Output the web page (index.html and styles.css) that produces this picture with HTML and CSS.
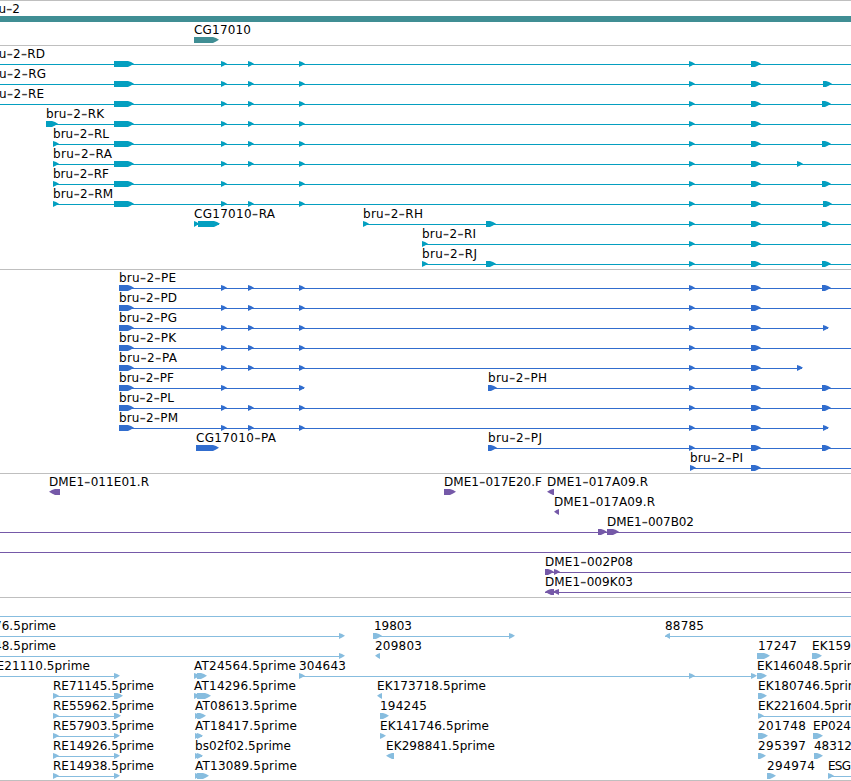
FILE: index.html
```
<!DOCTYPE html>
<html lang="en">
<head>
    <meta charset="UTF-8">
    <meta name="viewport" content="width=device-width, initial-scale=1.0">
    <title>bru-2 - Genome Browser</title>
    <link rel="stylesheet" href="styles.css">
</head>
<body>

    <div class="browser">
        <section class="track genes" id="genes"></section>
        <section class="track transcripts" id="transcripts"></section>
        <section class="track proteins" id="proteins"></section>
        <section class="track clones" id="clones"></section>
        <section class="track ests" id="ests"></section>
    </div>

    <script src="tracks.js"></script>
</body>
</html>
```
FILE: styles.css
```
body {
    margin: 0;
    background-color: #fff;
    font-family: 'DejaVu Sans', sans-serif;
}

.browser {
    box-sizing: border-box;
    width: 851px;
    height: 781px;
    overflow: hidden;
    display: flex;
    flex-direction: column;
    border-bottom: 1px solid #bfbfbf;
}

.track {
    flex: none;
    display: flex;
    flex-direction: column;
    padding-top: 3px;
    border-top: 1px solid #bfbfbf;
}

.ests {
    flex: 1;
    min-height: 0;
}

.row {
    display: block;
    flex: none;
    width: 851px;
    height: 20px;
    overflow: visible;
    fill: currentColor;
}

.label {
    font-size: 12px;
    fill: #000;
}

/* wider hyphens inside the names */
.dash {
    font-size: 18px;
    fill: #444;
}

.intron {
    shape-rendering: crispEdges;
}

.genes {
    gap: 1px;
    color: #408e94;
}

.transcripts {
    color: #049fc0;
}

.proteins {
    color: #316dce;
}

.clones {
    color: #7559a8;
}

.ests {
    color: #87bddf;
}
```
FILE: tracks.js
```
const SVG = 'http://www.w3.org/2000/svg';

// feature: [label, label start, label end, line start, line end, exons, strand]
const body = [[114, 134], [221, 227], [248, 254], [299, 305], [689, 695], [751, 761]];
const short = body.filter(exon => exon[0] !== 248);
const coding = [[119, 134]].concat(body.slice(1));
const tail = body.slice(4);

const tracks = {
    genes: [
        [['bru-2', -14, 20, 0, 0, [[-20, 900]]]],
        [['CG17010', 194, 251, 0, 0, [[194, 219]]]]
    ],
    transcripts: [
        [['bru-2-RD', -14, 45, 0, 851, body]],
        [['bru-2-RG', -14, 46, 0, 851, [...body, [823, 832]]]],
        [['bru-2-RE', -14, 44, 0, 851, [...body, [822, 831]]]],
        [['bru-2-RK', 46, 104, 46, 851, [[46, 58], ...body]]],
        [['bru-2-RL', 53, 109, 53, 851, [[53, 59], ...body, [822, 831]]]],
        [['bru-2-RA', 53, 112, 53, 851, [[53, 59], ...body, [797, 803]]]],
        [['bru-2-RF', 53, 109, 53, 851, [[53, 59], ...short, [822, 831]]]],
        [['bru-2-RM', 53, 113, 53, 851, [[53, 59], ...body, [823, 832]]]],
        [['CG17010-RA', 194, 275, 194, 219, [[194, 199], [198, 220]]],
         ['bru-2-RH', 363, 423, 363, 851, [[363, 369], [486, 496], ...tail, [822, 831]]]],
        [['bru-2-RI', 422, 476, 422, 851, [[422, 428], ...tail]]],
        [['bru-2-RJ', 422, 477, 422, 851, [[422, 428], [486, 496], ...tail, [822, 831]]]]
    ],
    proteins: [
        [['bru-2-PE', 119, 176, 119, 851, [...coding, [822, 831]]]],
        [['bru-2-PD', 119, 177, 119, 851, coding]],
        [['bru-2-PG', 119, 177, 119, 828, [...coding, [823, 829]]]],
        [['bru-2-PK', 119, 176, 119, 851, coding]],
        [['bru-2-PA', 119, 177, 119, 802, [...coding, [797, 803]]]],
        [['bru-2-PF', 119, 174, 119, 304, [[119, 134], [221, 227], [299, 305]]],
         ['bru-2-PH', 488, 547, 488, 851, [[488, 497], ...tail, [822, 831]]]],
        [['bru-2-PL', 119, 174, 119, 851, [...coding, [822, 831]]]],
        [['bru-2-PM', 119, 178, 119, 828, [...coding, [823, 829]]]],
        [['CG17010-PA', 196, 276, 0, 0, [[196, 219]]],
         ['bru-2-PJ', 488, 542, 488, 851, [[488, 497], ...tail, [822, 831]]]],
        [['bru-2-PI', 690, 743, 690, 851, [[690, 696], [751, 761]]]]
    ],
    clones: [
        [['DME1-011E01.R', 49, 149, 0, 0, [[49, 60]], '-'],
         ['DME1-017E20.F', 444, 542, 0, 0, [[444, 456]]],
         ['DME1-017A09.R', 547, 648, 0, 0, [[547, 554]], '-']],
        [['DME1-017A09.R', 554, 655, 0, 0, [[554, 559]], '-']],
        [['DME1-007B02', 607, 694, 0, 851, [[598, 607], [607, 619]]]],
        [['', 0, 0, 0, 851, []]],
        [['DME1-002P08', 545, 633, 545, 851, [[545, 554], [554, 560]]]],
        [['DME1-009K03', 545, 633, 545, 851, [[545, 554], [553, 559]], '-']]
    ],
    ests: [
        [['', 0, 0, 0, 851, []]],
        [['76.5prime', -6, 56, 0, 343, [[339, 345]]],
         ['19803', 374, 412, 373, 513, [[373, 382], [509, 515]]],
         ['88785', 665, 704, 665, 851, [[665, 670]], '-']],
        [['48.5prime', -6, 56, 0, 343, [[339, 345]]],
         ['209803', 375, 422, 0, 0, [[375, 380]], '-'],
         ['17247', 758, 797, 0, 0, [[757, 770]]],
         ['EK159', 812, 851, 0, 0, [[812, 822]]]],
        [['RE21110.5prime', -12, 90, 0, 118, [[114, 120]]],
         ['AT24564.5prime', 194, 296, 194, 205, [[194, 200], [197, 207]]],
         ['304643', 299, 346, 299, 755, [[299, 305], [689, 695], [751, 757]]],
         ['EK146048.5prime', 757, 866, 0, 0, [[757, 767]]]],
        [['RE71145.5prime', 53, 154, 53, 121, [[53, 59], [114, 123]]],
         ['AT14296.5prime', 194, 296, 194, 209, [[194, 200], [197, 211]]],
         ['EK173718.5prime', 377, 486, 0, 0, [[377, 382]], '-'],
         ['EK180746.5prime', 758, 867, 0, 0, [[758, 767]]]],
        [['RE55962.5prime', 53, 154, 53, 119, [[53, 59], [114, 121]]],
         ['AT08613.5prime', 195, 297, 195, 204, [[195, 200], [197, 206]]],
         ['194245', 380, 427, 0, 0, [[380, 389]]],
         ['EK221604.5prime', 758, 867, 758, 851, [[758, 764]]]],
        [['RE57903.5prime', 53, 154, 53, 118, [[53, 59], [114, 120]]],
         ['AT18417.5prime', 195, 297, 195, 202, [[195, 200], [197, 203]]],
         ['EK141746.5prime', 380, 489, 0, 0, [[380, 386]]],
         ['201748', 758, 806, 0, 0, [[758, 768]]],
         ['EP024', 813, 851, 0, 0, [[813, 823]]]],
        [['RE14926.5prime', 53, 154, 53, 118, [[53, 59], [114, 120]]],
         ['bs02f02.5prime', 195, 291, 195, 202, [[195, 200], [197, 203]]],
         ['EK298841.5prime', 386, 495, 0, 0, [[386, 394]], '-'],
         ['295397', 758, 806, 0, 0, [[758, 766]]],
         ['48312', 814, 852, 0, 0, [[814, 823]]]],
        [['RE14938.5prime', 53, 154, 53, 118, [[53, 59], [114, 120]]],
         ['AT13089.5prime', 195, 297, 195, 207, [[195, 200], [197, 209]]],
         ['294974', 767, 815, 0, 0, [[767, 776]]],
         ['ESG', 828, 851, 828, 851, [[828, 834]]]]
    ]
};

function add(parent, name, attrs) {
    const node = document.createElementNS(SVG, name);
    for (let key in attrs) node.setAttribute(key, attrs[key]);
    parent.appendChild(node);
    return node;
}

function drawExon(row, [start, end], strand) {
    const back = strand === '-' ? end : start;
    const tip = strand === '-' ? start : end;
    const dir = strand === '-' ? 1 : -1;
    const head = Math.min(6, end - start);
    const neck = tip + dir * head;
    const mid = tip + dir * head / 2;
    const points = [
        [back, 12], [neck, 12], [mid, 13.1], [tip, 14.8],
        [mid, 16.6], [neck, 18], [back, 18]
    ];
    add(row, 'polygon', { points: points.join(' ') });
}

function drawLabel(row, name, x, end) {
    const label = add(row, 'text', { class: 'label', x, y: 9, textLength: end - x });
    name.split('-').forEach((part, i) => {
        if (i > 0) {
            add(label, 'tspan', { class: 'dash', dy: 1 }).textContent = '-';
        }
        add(label, 'tspan', { dy: i > 0 ? -1 : 0 }).textContent = part;
    });
}

function drawFeature(row, [name, x, labelEnd, from, to, exons, strand]) {
    if (to > from) {
        add(row, 'rect', { class: 'intron', x: from, y: 15, width: to - from, height: 1 });
    }
    exons.forEach(exon => drawExon(row, exon, strand));
    if (name) drawLabel(row, name, x, labelEnd);
}

for (let id in tracks) {
    const track = document.getElementById(id);
    tracks[id].forEach(features => {
        const row = add(track, 'svg', { class: 'row' });
        features.forEach(feature => drawFeature(row, feature));
    });
}
```
